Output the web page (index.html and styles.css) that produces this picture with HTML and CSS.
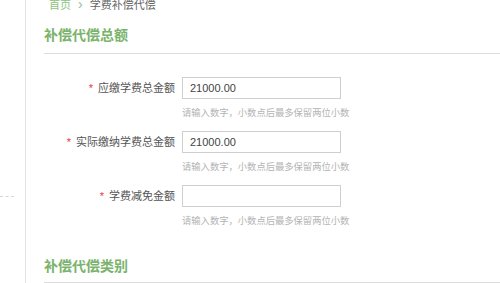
FILE: index.html
```html
<!DOCTYPE html>
<html lang="zh-CN">
<head>
<meta charset="utf-8">
<link rel="stylesheet" href="styles.css">
</head>
<body>
<div class="page">
  <aside class="side"><div class="side-dash"></div></aside>
  <main class="main">
    <div class="crumb"><span class="crumb-home">首页</span><span class="crumb-sep">›</span><span class="crumb-cur">学费补偿代偿</span></div>
    <h2 class="sec-title">补偿代偿总额</h2>
    <div class="form">
      <div class="row">
        <label class="label"><span class="star">*</span>应缴学费总金额</label>
        <div class="field">
          <div class="input">21000.00</div>
          <div class="hint">请输入数字，小数点后最多保留两位小数</div>
        </div>
      </div>
      <div class="row">
        <label class="label"><span class="star">*</span>实际缴纳学费总金额</label>
        <div class="field">
          <div class="input">21000.00</div>
          <div class="hint">请输入数字，小数点后最多保留两位小数</div>
        </div>
      </div>
      <div class="row">
        <label class="label"><span class="star">*</span>学费减免金额</label>
        <div class="field">
          <div class="input"></div>
          <div class="hint">请输入数字，小数点后最多保留两位小数</div>
        </div>
      </div>
    </div>
    <h2 class="sec-title sec-title-2">补偿代偿类别</h2>
  </main>
</div>
</body>
</html>
```
FILE: styles.css
```css
html, body {
  margin: 0;
  padding: 0;
  background: #fff;
  overflow: hidden;
}
body {
  font-family: "Liberation Sans", "Noto Sans CJK SC", sans-serif;
  color: #555;
}
.page {
  display: flex;
  height: 283px;
  overflow: hidden;
}
.side {
  width: 25px;
  flex: none;
  border-right: 1px solid #e2e2e2;
  position: relative;
}
.side-dash {
  position: absolute;
  left: 0;
  top: 196px;
  width: 14px;
  border-top: 1px dashed #d6d6d6;
}
.main {
  flex: 1;
  padding-left: 18px;
}
.crumb {
  font-size: 11px;
  line-height: 12px;
  height: 12px;
  margin-top: -2px;
  padding-left: 5px;
  color: #666;
}
.crumb-home { color: #8cc47e; }
.crumb-sep { color: #8cc47e; margin: 0 7px; font-size: 14px; }
.sec-title {
  margin: 15px 0 0;
  font-size: 14px;
  line-height: 20px;
  font-weight: bold;
  color: #7ab36c;
  padding-bottom: 8px;
  border-bottom: 1px solid #dcdcdc;
}
.sec-title-2 {
  margin-top: 29px;
  padding-bottom: 6px;
}
.form {
  padding-top: 23px;
}
.row {
  display: grid;
  grid-template-columns: 131px 159px;
  column-gap: 7px;
  margin-bottom: 12px;
}
.label {
  font-size: 11px;
  line-height: 22px;
  text-align: right;
  color: #555;
}
.star {
  color: #e8383d;
  font-size: 11px;
  margin-right: 5px;
}
.field {
  display: flex;
  flex-direction: column;
  gap: 8px;
}
.input {
  height: 20px;
  border: 1px solid #cfcfcf;
  font-size: 11px;
  line-height: 20px;
  padding-left: 7px;
  color: #444;
}
.hint {
  font-size: 9.3px;
  line-height: 12px;
  color: #b4b4b4;
  white-space: nowrap;
}
```
